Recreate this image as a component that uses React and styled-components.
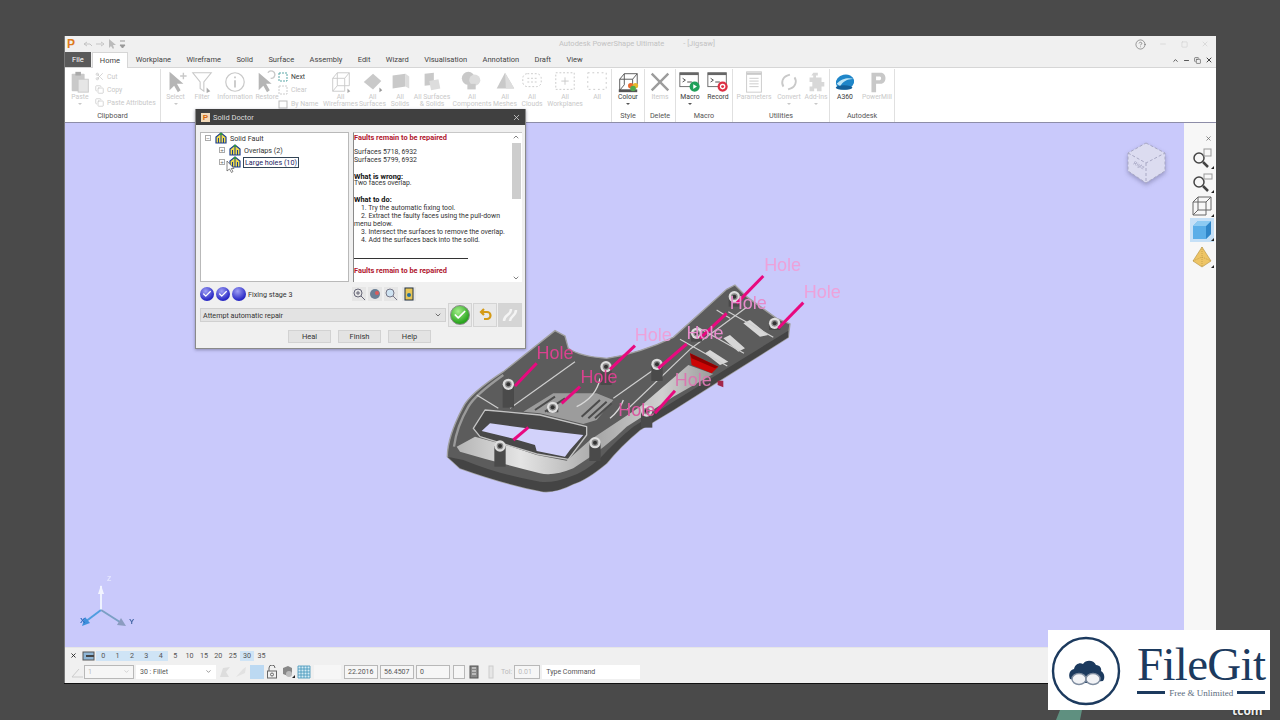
import React from 'react';
import styled, { createGlobalStyle } from 'styled-components';
import { X, ChevronDown, ChevronUp, Minus, Square, Copy as CopyIcon, Scissors, HelpCircle, Check } from 'lucide-react';

const GlobalStyle = createGlobalStyle`
    html, body {
        margin: 0;
        width: 1280px;
        height: 720px;
        overflow: hidden;
        background: #4a4a4a;
        font-family: Roboto, "Liberation Sans", sans-serif;
    }
    * { box-sizing: border-box; }
`;

const Page = styled.div`
    position: relative;
    width: 1280px;
    height: 720px;
    padding: 36px 64px 37px 64px;
`;

const Window = styled.div`
    position: relative;
    width: 1152px;
    height: 647px;
    display: flex;
    flex-direction: column;
    background: #f0f0f0;
    border-left: 1px solid #777;
    box-shadow: 0 1px 0 #111;
`;

const TitleBar = styled.div`
    height: 16px;
    flex: none;
    display: flex;
    align-items: center;
    padding: 0 5px 0 2px;
    position: relative;
`;

const AppLogo = styled.span`
    font: bold 12px "Liberation Sans", sans-serif;
    color: #dd7a1c;
    width: 16px;
`;

const QuickIcons = styled.div`
    display: flex;
    align-items: center;
    gap: 3px;
    color: #c4c4c4;
`;

const TitleText = styled.div`
    position: absolute;
    left: 494px;
    top: 3px;
    display: flex;
    gap: 19px;
    font: 7.5px Roboto, sans-serif;
    color: #c2c2c2;
    white-space: nowrap;
`;

const WinButtons = styled.div`
    margin-left: auto;
    display: flex;
    align-items: center;
    gap: 13.5px;
    padding-right: 2px;
    color: #cfcfcf;
`;

const TabStrip = styled.div`
    height: 16px;
    flex: none;
    display: flex;
    align-items: flex-end;
    border-bottom: 1px solid #d6d6d6;
`;

const Tab = styled.div`
    height: ${p => (p.$active ? 16 : 15)}px;
    display: flex;
    align-items: center;
    padding: 0 ${p => p.$pad || 7.7}px;
    font: 7.5px Roboto, sans-serif;
    color: ${p => (p.$file ? '#fff' : '#444')};
    background: ${p => (p.$file ? '#5a5a5a' : p.$active ? '#fff' : 'transparent')};
    margin-bottom: ${p => (p.$active ? -1 : 0)}px;
    margin-right: ${p => (p.$file ? 1 : 0)}px;
    border: ${p => (p.$active ? '1px solid #d6d6d6' : 'none')};
    border-bottom: none;
    position: relative;
`;

const SmallControls = styled.div`
    margin-left: auto;
    display: flex;
    align-items: center;
    gap: 4px;
    padding: 0 3px 3px 0;
    color: #444;
`;

const Ribbon = styled.div`
    height: 55px;
    flex: none;
    display: flex;
    background: #fff;
    border-bottom: 1px solid #8d8da8;
`;

const Group = styled.section`
    width: ${p => p.$w}px;
    flex: none;
    display: flex;
    flex-direction: column;
    border-right: 1px solid #e0e0e0;
    margin-top: 1px;
`;

const GroupTools = styled.div`
    flex: 1;
    display: flex;
    min-height: 0;
`;

const GroupLabel = styled.div`
    height: 13px;
    flex: none;
    text-align: center;
    font: 7.2px/13px Roboto, sans-serif;
    color: #555;
`;

const Tool = styled.div`
    width: ${p => p.$w}px;
    flex: none;
    display: flex;
    flex-direction: column;
    align-items: center;
    padding-top: 1px;
    color: ${p => (p.$off ? '#c8c8c8' : '#3a3a3a')};
    font: 6.8px/7px Roboto, sans-serif;
    text-align: center;
    white-space: nowrap;
`;

const ToolIcon = styled.svg`
    width: 24px;
    height: 24px;
    flex: none;
`;

const Caret = styled.span`
    width: 0;
    height: 0;
    margin-top: 2px;
    border-left: 2px solid transparent;
    border-right: 2px solid transparent;
    border-top: 2px solid ${p => (p.$off ? '#c8c8c8' : '#555')};
`;

const Stack = styled.div`
    width: ${p => p.$w}px;
    flex: none;
    display: flex;
    flex-direction: column;
    padding-top: 1px;
`;

const StackRow = styled.div`
    height: 13.5px;
    display: flex;
    align-items: center;
    gap: 3px;
    font: 6.8px Roboto, sans-serif;
    color: ${p => (p.$off ? '#c8c8c8' : '#3a3a3a')};
    white-space: nowrap;
`;

const Body = styled.div`
    flex: 1;
    display: flex;
    min-height: 0;
`;

const Canvas = styled.main`
    position: relative;
    flex: 1;
    background: #c9c9fb;
`;

const ModelDrawing = styled.svg`
    position: absolute;
    left: 375px;
    top: 127px;
    width: 410px;
    height: 250px;
    overflow: visible;
    filter: blur(.35px);
`;

const Triad = styled.svg`
    position: absolute;
    left: 10px;
    top: 441px;
    width: 70px;
    height: 65px;
    filter: blur(.4px);
`;

const ViewCube = styled.svg`
    position: absolute;
    left: 1060px;
    top: 16px;
    width: 44px;
    height: 48px;
    filter: drop-shadow(0 2px 2px rgba(90, 90, 130, .45)) blur(.3px);
`;

const SideBar = styled.aside`
    width: 32px;
    flex: none;
    display: flex;
    flex-direction: column;
    align-items: center;
    padding: 4px 0 0 4px;
    background: #f7f7f7;
    color: #666;
`;

const SideClose = styled.div`
    align-self: flex-end;
    padding-right: 4px;
    height: 19px;
`;

const SideButton = styled.div`
    position: relative;
    width: 24px;
    height: 24px;
    margin-top: ${p => p.$mt || 0}px;
    display: flex;
    align-items: center;
    justify-content: center;
    background: ${p => (p.$on ? '#c5e0f7' : 'transparent')};
    &:after {
        content: '';
        position: absolute;
        right: 0;
        bottom: 1px;
        border-left: 3px solid transparent;
        border-bottom: 3px solid #222;
    }
`;

const StatusBar = styled.footer`
    height: 36px;
    flex: none;
    display: flex;
    flex-direction: column;
    padding: 0 0 0 5px;
    background: #f0f0f0;
    border-top: 1px solid #e6e6e6;
`;

const StatusRow = styled.div`
    height: ${p => p.$h}px;
    flex: none;
    display: flex;
    align-items: center;
`;

const Level = styled.div`
    width: 14.4px;
    height: 10px;
    text-align: center;
    font: 7.2px/10px Roboto, sans-serif;
    color: #555;
    background: ${p => (p.$on ? '#cfe4f6' : 'transparent')};
`;

const Field = styled.div`
    width: ${p => p.$w}px;
    height: 14px;
    flex: none;
    margin-left: ${p => p.$ml || 0}px;
    display: flex;
    align-items: center;
    justify-content: space-between;
    padding: 0 3px;
    font: 7px Roboto, sans-serif;
    color: ${p => (p.$off ? '#bbb' : '#555')};
    background: ${p => (p.$flat ? '#f6f6f6' : '#fff')};
    border: 1px solid ${p => (p.$border ? '#b8b8b8' : 'transparent')};
`;

const StatusIcon = styled.svg`
    width: 14px;
    height: 14px;
    flex: none;
    margin-left: ${p => p.$ml || 0}px;
`;

const TolLabel = styled.span`
    margin-left: ${p => p.$ml || 0}px;
    font: 7px Roboto, sans-serif;
    color: #bbb;
`;

const Dialog = styled.div`
    position: absolute;
    left: 130px;
    top: 73px;
    width: 331px;
    height: 240px;
    display: flex;
    flex-direction: column;
    background: #f0f0f0;
    border: 1px solid #8a8a8a;
    border-top: none;
    box-shadow: 0 1px 3px rgba(60, 60, 90, .45);
    z-index: 2;
`;

const DialogTitle = styled.div`
    height: 16px;
    flex: none;
    display: flex;
    align-items: center;
    justify-content: space-between;
    padding: 0 4px 0 5px;
    background: #404040;
    color: #ddd;
    font: 7.5px Roboto, sans-serif;
`;

const DialogName = styled.div`
    display: flex;
    align-items: center;
    gap: 3px;
`;

const DialogLogo = styled.span`
    width: 9px;
    height: 9px;
    background: #f2d9b8;
    color: #d9680c;
    font: bold 8px/9px "Liberation Sans", sans-serif;
    text-align: center;
`;

const Panes = styled.div`
    height: 150px;
    flex: none;
    margin: 7px 3px 0 4px;
    display: flex;
    gap: 4px;
`;

const TreePane = styled.div`
    width: 149px;
    flex: none;
    background: #fff;
    border: 1px solid #b9b9b9;
    padding: 0 0 0 4px;
`;

const TreeRow = styled.div`
    height: 12px;
    display: flex;
    align-items: center;
    gap: 2px;
    margin-left: ${p => p.$indent || 0}px;
    font: 7.2px Roboto, sans-serif;
    color: #333;
    &:first-child {
        margin-top: -1px;
    }
`;

const TreeToggle = styled.span`
    width: 6px;
    height: 6px;
    flex: none;
    border: 1px solid #aaa;
    position: relative;
    margin-right: 2px;
    &:after {
        content: '${p => (p.$open ? '−' : '+')}';
        position: absolute;
        left: -1px;
        top: -2px;
        width: 6px;
        font: 6px/8px "Liberation Sans", sans-serif;
        text-align: center;
        color: #666;
    }
`;

const TreeLabel = styled.span`
    padding: 0 1px;
    border: ${p => (p.$focus ? '1px solid #345' : 'none')};
    color: ${p => (p.$focus ? '#23235f' : '#333')};
    line-height: 9px;
`;

const Pointer = styled.svg`
    position: absolute;
    left: 30px;
    top: 51px;
    width: 9px;
    height: 13px;
`;

const ReportPane = styled.div`
    flex: 1;
    display: flex;
    background: #fff;
    border-left: 1px solid #8a8a8a;
    border-top: 1px solid #c8c8c8;
    min-width: 0;
`;

const ReportText = styled.div`
    flex: 1;
    overflow: hidden;
    padding: 1px 0 0 0;
    font: 6.9px/7.72px Roboto, sans-serif;
    color: #333;
`;

const FaultHead = styled.div`
    font-weight: 700;
    font-size: 7.4px;
    color: #b0162e;
`;

const ReportHead = styled.div`
    font-weight: 700;
    font-size: 7.4px;
    color: #111;
    margin-bottom: ${p => p.$mb || 0}px;
`;

const Gap = styled.div`
    height: 7.72px;
`;

const NumberedLine = styled.div`
    text-indent: 7px;
    line-height: 8px;
`;

const ReportRule = styled.div`
    width: 114px;
    border-top: 1px solid #333;
    margin: 14.5px 0 8px;
`;

const ScrollTrack = styled.div`
    width: 12px;
    flex: none;
    display: flex;
    flex-direction: column;
    align-items: center;
    justify-content: space-between;
    color: #444;
    background: #fff;
`;

const ScrollThumb = styled.div`
    width: 9px;
    height: 56px;
    margin-top: 2px;
    background: #cdcdcd;
    margin-bottom: auto;
`;

const StageRow = styled.div`
    height: 16px;
    flex: none;
    margin: 4px 3px 0 4px;
    display: flex;
    align-items: center;
`;

const StageBall = styled.span`
    width: 14px;
    height: 14px;
    flex: none;
    margin-right: 2px;
    border-radius: 50%;
    display: flex;
    align-items: center;
    justify-content: center;
    color: #fff;
    background: radial-gradient(circle at 40% 30%, #9f9ff5, #2828c4 70%);
`;

const StageText = styled.span`
    font: 7.2px Roboto, sans-serif;
    color: #333;
    width: 104px;
`;

const MiniButton = styled.svg`
    width: 14px;
    height: 14px;
    flex: none;
    margin-right: ${p => p.$mr || 2}px;
    background: #e6e6e6;
`;

const RepairRow = styled.div`
    height: 24px;
    flex: none;
    margin: 1px 3px 0 4px;
    display: flex;
    align-items: center;
`;

const Combo = styled.div`
    width: 246px;
    height: 14px;
    flex: none;
    margin-right: 2px;
    display: flex;
    align-items: center;
    justify-content: space-between;
    padding: 0 3px 0 2px;
    background: #e3e3e3;
    border: 1px solid #d0d0d0;
    font: 7.2px Roboto, sans-serif;
    color: #333;
`;

const RepairButton = styled.div`
    width: 24px;
    height: 24px;
    flex: none;
    margin-right: 1px;
    display: flex;
    align-items: center;
    justify-content: center;
    background: ${p => (p.$off ? '#d5d5d5' : '#e9e9e9')};
    border: 1px solid #d4d4d4;
`;

const OkBall = styled.span`
    width: 20px;
    height: 20px;
    border-radius: 50%;
    display: flex;
    align-items: center;
    justify-content: center;
    color: #fff;
    background: radial-gradient(circle at 40% 30%, #a4ef8a, #2aa51f 70%);
    border: 1px solid #888;
`;

const ActionRow = styled.div`
    flex: 1;
    display: flex;
    align-items: flex-start;
    justify-content: center;
    gap: 7px;
    padding: 3px 2px 0 0;
`;

const ActionButton = styled.div`
    width: 43px;
    height: 13px;
    background: #e3e3e3;
    border: 1px solid #d2d2d2;
    text-align: center;
    font: 7.5px/11px Roboto, sans-serif;
    color: #333;
`;

const Watermark = styled.div`
    position: absolute;
    left: 1048px;
    top: 630px;
    width: 222px;
    height: 80px;
    display: flex;
    align-items: center;
    padding: 0 5px 0 2px;
    background: #fff;
    z-index: 3;
`;

const WatermarkCircle = styled.svg`
    width: 74px;
    height: 74px;
    flex: none;
`;

const WatermarkText = styled.div`
    flex: 1;
    margin-left: 13px;
    padding-bottom: 2px;
    display: flex;
    flex-direction: column;
    color: #1c3a5e;
`;

const BrandName = styled.div`
    font: 47px/47px "Liberation Serif", serif;
    letter-spacing: -.7px;
    white-space: nowrap;
`;

const BrandTag = styled.div`
    display: flex;
    align-items: center;
    gap: 4px;
    font: 9px/10px "Liberation Serif", serif;
    color: #5b6b7c;
    white-space: nowrap;
    &:before, &:after {
        content: '';
        flex: 1;
        height: 2.5px;
        background: #1c3a5e;
    }
`;

const CornerMark = styled.div`
    position: absolute;
    left: 1232px;
    top: 702px;
    font: bold 12px "Open Sans", sans-serif;
    color: #eee;
    text-shadow: 0 0 2px #111;
    z-index: 2;
`;

const TealScrap = styled.svg`
    position: absolute;
    left: 1056px;
    top: 710px;
    width: 32px;
    height: 10px;
`;

const GREY = '#c9c9c9';

const glyphs = {
    paste: <g fill={GREY}><rect x="4" y="4" width="14" height="19" rx="1" /><rect x="8" y="2" width="6" height="4" fill="#aaa" /><rect x="11" y="10" width="11" height="14" fill="#e6e6e6" stroke={GREY} /></g>,
    select: <g fill="#b5b5b5"><path d="M6 2 L6 22 L11 17 L15 24 L18 22 L14 15 L21 15 Z" /><path d="M21 3 v7 M17.500 6.500 h7" stroke={GREY} strokeWidth="1.500" /></g>,
    filter: <g fill="none" stroke={GREY} strokeWidth="1.200"><path d="M3 3 H23 L15 13 V23 L11 20 V13 Z" /><path d="M18 19 l0 6 l4 -2 z" fill="#aaa" stroke="none" /></g>,
    info: <g fill="none" stroke={GREY} strokeWidth="1.300"><circle cx="13" cy="13" r="10" /><path d="M13 11 V19 M13 7 v2" strokeWidth="2" /></g>,
    restore: <g fill="#b5b5b5"><path d="M4 3 L4 22 L9 17 L13 24 L16 22 L12 15 L18 15 Z" /><path d="M17 9 a4 4 0 1 0 -3 -6" fill="none" stroke={GREY} strokeWidth="1.500" /></g>,
    wire: <g fill="none" stroke={GREY}><path d="M4 9 H17 V23 H4 Z M9 3 H22 V17 H17 M4 9 L9 3 M17 9 L22 3 M9 3 V17 H17 M4 23 L9 17" /><path d="M20 20 l0 5 l3 -2 z" fill="#aaa" stroke="none" /></g>,
    surface: <g fill={GREY}><path d="M3 13 L13 4 L22 12 L13 21 Z" /><path d="M20 19 l0 5 l3 -2 z" fill="#999" /></g>,
    solid: <g fill={GREY}><path d="M5 6 L19 4 V18 L5 20 Z" /><path d="M19 4 L23 7 V20 L19 18 Z" fill="#ddd" /></g>,
    both: <g fill={GREY}><path d="M5 4 L15 3 L15 16 L5 17 Z" /><path d="M10 12 L20 10 L22 20 L12 22 Z" fill="#ddd" /></g>,
    comp: <g fill={GREY}><circle cx="9" cy="9" r="7" /><circle cx="16" cy="11" r="6" fill="#ddd" /><rect x="8" y="15" width="9" height="6" /></g>,
    mesh: <g fill={GREY}><path d="M13 3 L23 20 H4 Z" /><path d="M13 3 L23 20 H14 Z" fill="#ddd" /></g>,
    cloud: <g fill="none" stroke={GREY} strokeDasharray="2 2"><rect x="3" y="4" width="20" height="14" rx="5" /><path d="M8 9 h10 M8 13 h10" /></g>,
    plane: <g fill="none" stroke={GREY} strokeDasharray="2 2"><rect x="3" y="3" width="20" height="18" /><path d="M13 8 v8 M9 12 h8" strokeDasharray="none" /></g>,
    all: <g fill="none" stroke={GREY} strokeDasharray="2 3"><rect x="3" y="3" width="20" height="18" /></g>,
    colour: <g><path d="M4 10 H18 V22 H4 Z M9 4 H23 V16 H18 M4 10 L9 4 M18 10 L23 4 M4 22 L9 16 V4" fill="none" stroke="#555" /><rect x="3" y="21" width="20" height="3" fill="#555" /><circle cx="16" cy="17" r="3" fill="#ea6a2e" /><circle cx="21" cy="17" r="3" fill="#e7b82f" /><circle cx="18.500" cy="20" r="3" fill="#4eab4e" /></g>,
    del: <path d="M4 4 L22 22 M22 4 L4 22" stroke="#9c9c9c" strokeWidth="2.600" />,
    macro: <g><rect x="2" y="3" width="20" height="15" fill="#fff" stroke="#666" /><rect x="2" y="3" width="20" height="2.500" fill="#666" /><path d="M5 9 l3 2 l-3 2 M10 13 h5" fill="none" stroke="#444" /><circle cx="18" cy="18" r="5.500" fill="#1fa05a" /><path d="M16.500 15.500 l4 2.500 l-4 2.500 z" fill="#fff" /></g>,
    record: <g><rect x="2" y="3" width="20" height="15" fill="#fff" stroke="#666" /><rect x="2" y="3" width="20" height="2.500" fill="#666" /><path d="M5 9 l3 2 l-3 2 M10 13 h5" fill="none" stroke="#444" /><circle cx="18" cy="18" r="5.500" fill="#dd2f43" /><circle cx="18" cy="18" r="3" fill="#fff" /><circle cx="18" cy="18" r="1.600" fill="#dd2f43" /></g>,
    params: <g fill="none" stroke={GREY}><rect x="5" y="2" width="16" height="22" /><path d="M5 4 h16" strokeWidth="2.500" /><path d="M8 9 h10 M8 12 h10 M8 15 h10 M8 18 h10" /></g>,
    convert: <g fill="none" stroke={GREY} strokeWidth="2"><path d="M7 18 a8 8 0 0 1 4 -12 l3 -1" /><path d="M19 8 a8 8 0 0 1 -4 12 l-3 1" /></g>,
    addins: <path fill="#d8d8d8" d="M10 3 h5 v3 h-2 v2 h6 v5 h3 v5 h-3 v5 h-5 v-3 h-3 v3 h-5 v-5 h3 v-5 h-3 v-5 h4 v-2 h-2 z" />,
    a360: <g><ellipse cx="13" cy="13" rx="10" ry="8" fill="#1f86c9" transform="rotate(-12 13 13)" /><path d="M4 15 C10 8 18 8 23 10 C18 9 10 12 8 18 Z" fill="#bfe6f7" /><ellipse cx="12" cy="19" rx="9" ry="2.500" fill="#14609a" /></g>,
    pmill: <path fill="#c8c8c8" fillRule="evenodd" d="M7 3 H17 C24 3 24 15 17 15 H12 V24 H7 Z M12 7 V11 H16 C18 11 18 7 16 7 Z" />,
};

const ToolItem = ({ w, glyph, off, caret, children }) => (
    <Tool $w={w} $off={off}>
        <ToolIcon viewBox="0 0 26 26">{glyphs[glyph]}</ToolIcon>
        {children}
        {caret && <Caret $off={off} />}
    </Tool>
);

const FaultIcon = () => (
    <svg width="12" height="12" viewBox="0 0 12 12" style={{ flex: 'none' }}>
        <path d="M1 11 V5 L6 1 L11 5 V11 Z" fill="#f0dc4a" stroke="#1c3f8f" strokeWidth="1.200" />
        <path d="M6 3 V11 M3.500 6 V11 M8.500 6 V11" stroke="#1c3f8f" strokeWidth="1" />
        <circle cx="6" cy="2" r="1.300" fill="#2f9a3c" />
    </svg>
);

const ModelPath = () => {
    const bosses = [[205, 403, 70], [498, 350, 55], [651, 343, 50], [883, 140, 30], [1004, 220, 20], [770, 250, 25], [338, 472, 15], [620, 483, 50], [180, 588, 62], [465, 578, 55]];
    const beams = [[970, 78, 890, 160], [1090, 158, 1015, 235], [860, 190, 780, 265], [740, 282, 655, 355], [585, 287, 510, 358], [290, 340, 225, 408], [420, 410, 365, 460], [265, 532, 220, 570], [705, 422, 645, 490]];
    const ribs = [[110, 435, 175, 475], [210, 475, 405, 335], [720, 268, 862, 348], [770, 230, 912, 310], [865, 185, 1000, 262], [560, 480, 750, 298], [750, 298, 920, 172], [830, 180, 870, 205], [520, 445, 640, 360]];
    const labels = [[1028, 64, '#eda2da'], [1147, 145, '#eda2da'], [925, 176, '#e68ccb'], [640, 274, '#eda2da'], [795, 268, '#e68ccb'], [345, 326, '#d9428f'], [477, 398, '#d9428f'], [760, 408, '#d977b0'], [590, 498, '#d9579f']];
    return (
        <g transform="scale(.3333)">
            <defs>
                <linearGradient id="frontFloor" x1="0" y1="0" x2="1" y2="0">
                    <stop offset="0" stopColor="#b4b4b4" />
                    <stop offset=".25" stopColor="#e4e4e4" />
                    <stop offset=".55" stopColor="#a8a8a8" />
                    <stop offset=".8" stopColor="#d0d0d0" />
                    <stop offset="1" stopColor="#9a9a9a" />
                </linearGradient>
            </defs>
            <path d="M22 620 Q22 560 70 470 Q90 430 190 365 L345 242 L375 258 L385 295 Q420 320 500 325 Q600 310 700 262 L860 118 L885 105 L920 140 L1010 205 L1050 222 L1045 262 L850 385 L700 480 L600 540 Q540 590 500 640 Q440 690 400 702 Q350 728 310 725 Q200 705 60 655 Z" fill="#5c5c5c" stroke="#a0a0a0" strokeWidth="4" />
            <path d="M22 620 L60 655 Q200 705 310 725 Q350 728 400 702 Q440 690 500 640 Q540 590 600 540 L700 480 L850 385 L1045 262 L1045 242 L850 362 L700 455 L580 530 Q530 570 480 625 Q430 670 390 680 Q340 700 300 695 Q180 675 70 630 Z" fill="#444" />
            <path d="M50 590 L105 560 L215 590 L290 615 L380 632 L450 570 L600 470 L745 345 L820 372 L700 440 L560 530 Q500 590 400 655 Q340 680 300 670 Q180 640 60 605 Z" fill="url(#frontFloor)" />
            <path d="M42 590 Q50 530 85 470 Q105 435 190 375" fill="none" stroke="#9a9a9a" strokeWidth="7" />
            <path d="M250 485 L340 430 L470 430 L520 450 L470 510 L430 522 L300 490 Z" fill="#9c9c9c" />
            <path d="M285 480 L345 440 M315 485 L375 445 M425 500 L480 450 M445 505 L500 455 M465 505 L515 460" stroke="#4c4c4c" strokeWidth="6" />
            <path d="M410 470 Q470 440 480 385" fill="none" stroke="#d8d8d8" strokeWidth="4" />
            <path d="M510 505 Q540 480 550 450" fill="none" stroke="#d8d8d8" strokeWidth="4" />
            <path d="M100 535 L135 480 L300 495 L440 530 L440 555 L385 628 L290 612 L120 560 Z" fill="#484848" stroke="#c4c4c4" strokeWidth="4" strokeLinejoin="round" />
            <path d="M125 543 L215 565 L285 585 L290 603 L375 620 L390 600 L430 555 L300 540 L150 520 Z" fill="#d2d2fa" />
            <path d="M910 220 L930 210 L985 255 L960 260 Z M850 265 L870 255 L915 295 L895 305 Z M795 310 L810 300 L865 335 L840 345 Z" fill="#d7d7d7" />
            {ribs.map(([a, b, c, d]) => (
                <line key={`${a}-${b}`} x1={a} y1={b} x2={c} y2={d} stroke="#cfcfcf" strokeWidth="3.500" />
            ))}
            <path d="M750 310 L835 350 L815 370 L755 345 Z" fill="#cc0505" />
            <path d="M750 310 L835 350 L825 355 L755 325 Z" fill="#8e0000" />
            <path d="M833 392 H850 V412 L833 405 Z" fill="#a3264a" />
            {bosses.map(([x, y, h]) => (
                <g key={`${x}-${y}`}>
                    <rect x={x - 17} y={y} width="34" height={h} fill="#4a4a4a" />
                    <circle cx={x} cy={y} r="17" fill="#dedede" />
                    <circle cx={x} cy={y} r="10" fill="#8a8a8a" />
                    <circle cx={x} cy={y} r="6" fill="#333" />
                </g>
            ))}
            {beams.map(([a, b, c, d]) => (
                <line key={`${a}-${b}`} x1={a} y1={b} x2={c} y2={d} stroke="#e8097f" strokeWidth="9" />
            ))}
            {labels.map(([x, y, fill]) => (
                <text key={`${x}-${y}`} x={x} y={y} fill={fill} textAnchor="middle" fontFamily="Liberation Sans, sans-serif" fontSize="54">Hole</text>
            ))}
        </g>
    );
};

const App = () => (
    <Page>
        <GlobalStyle />
        <Window>
            <TitleBar>
                <AppLogo>P</AppLogo>
                <QuickIcons>
                    <svg width="22" height="9" viewBox="0 0 22 9" fill="none" stroke="#c4c4c4"><path d="M1 4 H7 L9 6 M1 4 l3 -2 M1 4 l3 2 M13 4 H19 M21 4 l-3 -2 M21 4 l-3 2" /></svg>
                    <svg width="8" height="10" viewBox="0 0 8 10" fill="#bbb"><path d="M1 0 V9 L3 7 L5 10 L6 9 L5 6 H8 Z" /></svg>
                    <svg width="7" height="9" viewBox="0 0 7 9" fill="#999"><path d="M1 1 H6 M1 5 L3.500 8 L6 5 Z" stroke="#999" /></svg>
                </QuickIcons>
                <TitleText>
                    <span>Autodesk PowerShape Ultimate</span>
                    <span>- [Jigsaw]</span>
                </TitleText>
                <WinButtons>
                    <HelpCircle size={11} color="#555" strokeWidth={1.200} />
                    <Minus size={8} />
                    <Square size={7} />
                    <X size={8} />
                </WinButtons>
            </TitleBar>
            <TabStrip>
                <Tab $file $pad={7}>File</Tab>
                <Tab $active $pad={7}>Home</Tab>
                <Tab>Workplane</Tab>
                <Tab>Wireframe</Tab>
                <Tab>Solid</Tab>
                <Tab>Surface</Tab>
                <Tab>Assembly</Tab>
                <Tab>Edit</Tab>
                <Tab>Wizard</Tab>
                <Tab>Visualisation</Tab>
                <Tab>Annotation</Tab>
                <Tab>Draft</Tab>
                <Tab>View</Tab>
                <SmallControls>
                    <ChevronUp size={7} strokeWidth={3} />
                    <Minus size={7} strokeWidth={3} />
                    <CopyIcon size={7} strokeWidth={2} />
                    <X size={8} strokeWidth={3} />
                </SmallControls>
            </TabStrip>
            <Ribbon>
                <Group $w={96}>
                    <GroupTools>
                        <ToolItem w={30} glyph="paste" off caret>Paste</ToolItem>
                        <Stack $w={66}>
                            <StackRow $off><Scissors size={9} />Cut</StackRow>
                            <StackRow $off><CopyIcon size={9} />Copy</StackRow>
                            <StackRow $off><CopyIcon size={9} />Paste Attributes</StackRow>
                        </Stack>
                    </GroupTools>
                    <GroupLabel>Clipboard</GroupLabel>
                </Group>
                <Group $w={451}>
                    <GroupTools>
                        <ToolItem w={29} glyph="select" off caret>Select</ToolItem>
                        <ToolItem w={24} glyph="filter" off>Filter</ToolItem>
                        <ToolItem w={42} glyph="info" off>Information</ToolItem>
                        <ToolItem w={22} glyph="restore" off>Restore</ToolItem>
                        <Stack $w={45}>
                            <StackRow><svg width="10" height="10" viewBox="0 0 10 10" fill="none" stroke="#5aa7a7" strokeDasharray="2 1"><rect x="1" y="1" width="8" height="8" /></svg>Next</StackRow>
                            <StackRow $off><svg width="10" height="10" viewBox="0 0 10 10" fill="none" stroke="#ccc" strokeDasharray="2 1"><rect x="1" y="1" width="8" height="8" /></svg>Clear</StackRow>
                            <StackRow $off><svg width="10" height="10" viewBox="0 0 10 10" fill="none" stroke="#bbb"><rect x="1" y="2" width="8" height="7" /></svg>By Name</StackRow>
                        </Stack>
                        <ToolItem w={35} glyph="wire" off>All<br />Wireframes</ToolItem>
                        <ToolItem w={29} glyph="surface" off>All<br />Surfaces</ToolItem>
                        <ToolItem w={26} glyph="solid" off>All<br />Solids</ToolItem>
                        <ToolItem w={38} glyph="both" off>All Surfaces<br />&amp; Solids</ToolItem>
                        <ToolItem w={42} glyph="comp" off>All<br />Components</ToolItem>
                        <ToolItem w={24} glyph="mesh" off>All<br />Meshes</ToolItem>
                        <ToolItem w={30} glyph="cloud" off>All<br />Clouds</ToolItem>
                        <ToolItem w={36} glyph="plane" off>All<br />Workplanes</ToolItem>
                        <ToolItem w={28} glyph="all" off>All</ToolItem>
                    </GroupTools>
                </Group>
                <Group $w={33}>
                    <GroupTools><ToolItem w={32} glyph="colour" caret>Colour</ToolItem></GroupTools>
                    <GroupLabel>Style</GroupLabel>
                </Group>
                <Group $w={31}>
                    <GroupTools><ToolItem w={30} glyph="del" off>Items</ToolItem></GroupTools>
                    <GroupLabel>Delete</GroupLabel>
                </Group>
                <Group $w={57}>
                    <GroupTools>
                        <ToolItem w={28} glyph="macro" caret>Macro</ToolItem>
                        <ToolItem w={28} glyph="record">Record</ToolItem>
                    </GroupTools>
                    <GroupLabel>Macro</GroupLabel>
                </Group>
                <Group $w={97}>
                    <GroupTools>
                        <ToolItem w={42} glyph="params" off>Parameters</ToolItem>
                        <ToolItem w={28} glyph="convert" off caret>Convert</ToolItem>
                        <ToolItem w={26} glyph="addins" off caret>Add-Ins</ToolItem>
                    </GroupTools>
                    <GroupLabel>Utilities</GroupLabel>
                </Group>
                <Group $w={65}>
                    <GroupTools>
                        <ToolItem w={30} glyph="a360">A360</ToolItem>
                        <ToolItem w={34} glyph="pmill" off>PowerMill</ToolItem>
                    </GroupTools>
                    <GroupLabel>Autodesk</GroupLabel>
                </Group>
            </Ribbon>
            <Body>
                <Canvas>
                    <ModelDrawing viewBox="0 0 410 250"><ModelPath /></ModelDrawing>
                    <Triad viewBox="0 0 70 65">
                        <path d="M26 46 V22" fill="none" stroke="#eef2ff" strokeWidth="2" />
                        <path d="M26 46 L10 58" stroke="#4f9de0" strokeWidth="2" />
                        <path d="M26 46 L48 60" stroke="#7b9fc4" strokeWidth="2" />
                        <path d="M23 30 L26 21 L29 30 Z" fill="#f2f4ff" />
                        <path d="M7 62 L10 53 L15 59 Z" fill="#3e90dc" />
                        <path d="M51 62 L42 61 L46 54 Z" fill="#8b9cc0" />
                        <text x="32" y="17" fontFamily="Liberation Sans, sans-serif" fontSize="7" fontWeight="700" fill="#e4e6ff">Z</text>
                        <text x="5" y="59" fontFamily="Liberation Sans, sans-serif" fontSize="8" fontWeight="700" fill="#2e6ec0">X</text>
                        <text x="54" y="60" fontFamily="Liberation Sans, sans-serif" fontSize="8" fontWeight="700" fill="#4a6aa8">Y</text>
                    </Triad>
                    <ViewCube viewBox="0 0 44 48">
                        <path d="M21 4 L40 14 V32 L21 44 L3 32 V14 Z" fill="#dcdcf0" stroke="#a8a8c4" strokeDasharray="3 2" />
                        <path d="M3 14 L21 24 L40 14 M21 24 V44" fill="none" stroke="#a8a8c4" strokeDasharray="3 2" />
                        <text x="8" y="25" fontFamily="Liberation Sans, sans-serif" fontSize="5" fill="#9a9ab8" transform="rotate(28 8 25)">Right</text>
                    </ViewCube>
                </Canvas>
                <SideBar>
                    <SideClose><X size={7} strokeWidth={2.500} /></SideClose>
                    <SideButton>
                        <svg width="22" height="22" viewBox="0 0 22 22" fill="none" stroke="#444"><circle cx="8" cy="11" r="5" strokeWidth="1.500" /><path d="M12 15 L17 20" strokeWidth="2.500" /><rect x="13" y="2" width="7" height="7" stroke="#999" /></svg>
                    </SideButton>
                    <SideButton>
                        <svg width="22" height="22" viewBox="0 0 22 22" fill="none" stroke="#444"><circle cx="8" cy="11" r="5" strokeWidth="1.500" /><path d="M12 15 L17 20" strokeWidth="2.500" /><rect x="13" y="3" width="8" height="5" stroke="#999" /></svg>
                    </SideButton>
                    <SideButton>
                        <svg width="22" height="22" viewBox="0 0 22 22" fill="none" stroke="#666"><path d="M2 7 H15 V20 H2 Z M7 2 H20 V15 H15 M2 7 L7 2 M15 7 L20 2 M7 2 V15 H15 M2 20 L7 15" /></svg>
                    </SideButton>
                    <SideButton $on>
                        <svg width="22" height="22" viewBox="0 0 22 22"><path d="M2 7 L7 2 H20 V15 L15 20 H2 Z" fill="#5aaee8" /><path d="M15 7 L20 2 V15 L15 20 Z" fill="#2f86c9" /><path d="M2 7 L7 2 H20 L15 7 Z" fill="#8ccaf2" /></svg>
                    </SideButton>
                    <SideButton $mt={3}>
                        <svg width="22" height="22" viewBox="0 0 22 22"><path d="M11 1 L20 15 L11 21 L2 15 Z" fill="#eec566" stroke="#b08f3e" strokeWidth=".6" /><path d="M11 1 V21 M2 15 L11 11 L20 15" fill="none" stroke="#b08f3e" strokeWidth=".6" strokeDasharray="1 1" /></svg>
                    </SideButton>
                </SideBar>
            </Body>
            <StatusBar>
                <StatusRow $h={15}>
                    <X size={7} strokeWidth={3} color="#222" />
                    <StatusIcon $ml={5} viewBox="0 0 14 14"><rect x="1" y="3" width="11" height="8" fill="#8fb6d6" stroke="#555" /><rect x="4" y="6" width="8" height="2" fill="#444" /></StatusIcon>
                    <Level $on>0</Level>
                    <Level $on>1</Level>
                    <Level $on>2</Level>
                    <Level $on>3</Level>
                    <Level $on>4</Level>
                    <Level>5</Level>
                    <Level>10</Level>
                    <Level>15</Level>
                    <Level>20</Level>
                    <Level>25</Level>
                    <Level $on>30</Level>
                    <Level>35</Level>
                </StatusRow>
                <StatusRow $h={17}>
                    <StatusIcon viewBox="0 0 14 14"><path d="M2 12 H13 M2 12 L9 4" stroke="#ccc" fill="none" /></StatusIcon>
                    <Field $w={50} $flat $border $off>1<ChevronDown size={7} /></Field>
                    <Field $w={80} $ml={2}>30 : Fillet<ChevronDown size={7} /></Field>
                    <StatusIcon $ml={2} viewBox="0 0 14 14"><path d="M2 12 L5 3 L12 2 L8 7 L11 12 Z" fill="#ddd" /></StatusIcon>
                    <StatusIcon $ml={2} viewBox="0 0 14 14"><path d="M2 12 L9 4 L12 2 L11 8 Z" fill="#e2e2e2" /></StatusIcon>
                    <StatusIcon $ml={2} viewBox="0 0 14 14"><rect width="14" height="14" fill="#bcd9f2" /></StatusIcon>
                    <StatusIcon $ml={1} viewBox="0 0 14 14" fill="none" stroke="#666"><rect x="2.500" y="6" width="9" height="7" /><path d="M4 6 V3 a3 3 0 0 1 6 0" /><circle cx="7" cy="9.500" r="1.500" /></StatusIcon>
                    <StatusIcon $ml={2} viewBox="0 0 14 14"><path d="M2 3 L7 1 L11 3 V9 L7 11 L2 9 Z" fill="#888" /><circle cx="8" cy="9" r="3" fill="#bbb" /><path d="M11 13 L14 13 L14 10 Z" fill="#222" /></StatusIcon>
                    <StatusIcon $ml={2} viewBox="0 0 14 14" stroke="#3c93b8" strokeWidth=".8"><path d="M1 1 H13 V13 H1 Z M1 4 H13 M1 7 H13 M1 10 H13 M4 1 V13 M7 1 V13 M10 1 V13" fill="#d5ecf5" /></StatusIcon>
                    <Field $w={27} $ml={3} $flat />
                    <Field $w={34} $ml={3} $border $flat>22.2016</Field>
                    <Field $w={34} $ml={2} $border $flat>56.4507</Field>
                    <Field $w={34} $ml={2} $border $flat>0</Field>
                    <Field $w={12} $ml={3} $border $flat />
                    <StatusIcon $ml={2} viewBox="0 0 14 14"><rect x="3" y="1" width="8" height="12" fill="#888" stroke="#555" /><path d="M5 3 h4 M5 6 h4 M5 9 h4" stroke="#eee" /></StatusIcon>
                    <StatusIcon $ml={3} viewBox="0 0 14 14"><rect x="5" y="1" width="4" height="12" fill="#e6e6e6" stroke="#ccc" /></StatusIcon>
                    <TolLabel $ml={3}>Tol:</TolLabel>
                    <Field $w={26} $ml={2} $border $flat $off>0.01</Field>
                    <Field $w={98} $ml={2}>Type Command</Field>
                </StatusRow>
            </StatusBar>
            <Dialog>
                <DialogTitle>
                    <DialogName><DialogLogo>P</DialogLogo>Solid Doctor</DialogName>
                    <X size={9} strokeWidth={2} />
                </DialogTitle>
                <Panes>
                    <TreePane>
                        <TreeRow><TreeToggle $open /><FaultIcon /><TreeLabel>Solid Fault</TreeLabel></TreeRow>
                        <TreeRow $indent={14}><TreeToggle /><FaultIcon /><TreeLabel>Overlaps (2)</TreeLabel></TreeRow>
                        <TreeRow $indent={14}><TreeToggle /><FaultIcon /><TreeLabel $focus>Large holes (10)</TreeLabel></TreeRow>
                    </TreePane>
                    <ReportPane>
                        <ReportText>
                            <FaultHead>Faults remain to be repaired</FaultHead>
                            <Gap />
                            <div>Surfaces 5718, 6932</div>
                            <div>Surfaces 5799, 6932</div>
                            <Gap />
                            <ReportHead>What is wrong:</ReportHead>
                            <div>Two faces overlap.</div>
                            <Gap />
                            <ReportHead $mb={.5}>What to do:</ReportHead>
                            <NumberedLine>1. Try the automatic fixing tool.</NumberedLine>
                            <NumberedLine>2. Extract the faulty faces using the pull-down menu below.</NumberedLine>
                            <NumberedLine>3. Intersect the surfaces to remove the overlap.</NumberedLine>
                            <NumberedLine>4. Add the surfaces back into the solid.</NumberedLine>
                            <ReportRule />
                            <FaultHead>Faults remain to be repaired</FaultHead>
                        </ReportText>
                        <ScrollTrack>
                            <ChevronUp size={8} strokeWidth={2} />
                            <ScrollThumb />
                            <ChevronDown size={8} strokeWidth={2} />
                        </ScrollTrack>
                    </ReportPane>
                </Panes>
                <StageRow>
                    <StageBall><Check size={10} strokeWidth={3} /></StageBall>
                    <StageBall><Check size={10} strokeWidth={3} /></StageBall>
                    <StageBall />
                    <StageText>Fixing stage 3</StageText>
                    <MiniButton viewBox="0 0 14 14" fill="none" stroke="#667"><circle cx="6" cy="6" r="4" /><path d="M9 9 L13 13 M4 6 H8 M6 4 V8" /></MiniButton>
                    <MiniButton viewBox="0 0 14 14"><circle cx="7" cy="7" r="5" fill="#6b7f95" /><circle cx="9" cy="6" r="2" fill="#dd5a5a" /></MiniButton>
                    <MiniButton $mr={4} viewBox="0 0 14 14" fill="none" stroke="#778"><circle cx="6" cy="6" r="4" fill="#cfe3f2" /><path d="M9 9 L13 13" /></MiniButton>
                    <MiniButton viewBox="0 0 14 14"><rect x="3" y="1" width="8" height="12" fill="#e8c657" stroke="#234" /><circle cx="7" cy="8" r="2" fill="#27709c" /></MiniButton>
                </StageRow>
                <RepairRow>
                    <Combo>Attempt automatic repair<ChevronDown size={8} /></Combo>
                    <RepairButton><OkBall><Check size={14} strokeWidth={3} /></OkBall></RepairButton>
                    <RepairButton>
                        <svg width="14" height="14" viewBox="0 0 14 14" fill="none" stroke="#d49a16" strokeWidth="2.200"><path d="M4 4 H9 a3 3 0 0 1 0 7 H6 M6 1 L3 4 L6 7" /></svg>
                    </RepairButton>
                    <RepairButton $off>
                        <svg width="18" height="18" viewBox="0 0 18 18" fill="none" stroke="#f4f4f4" strokeWidth="2.500"><path d="M3 15 C3 8 10 10 10 3 M9 15 C9 10 15 10 15 4" /></svg>
                    </RepairButton>
                </RepairRow>
                <ActionRow>
                    <ActionButton>Heal</ActionButton>
                    <ActionButton>Finish</ActionButton>
                    <ActionButton>Help</ActionButton>
                </ActionRow>
                <Pointer viewBox="0 0 9 13"><path d="M1 1 V11 L3.500 9 L5.500 12.500 L7 11.500 L5.200 8.500 H8 Z" fill="#fff" stroke="#555" strokeWidth=".7" /></Pointer>
            </Dialog>
        </Window>
        <TealScrap viewBox="0 0 32 10"><path d="M4 0 H26 L24 10 H0 Z" fill="#5f9080" /></TealScrap>
        <CornerMark>tcom</CornerMark>
        <Watermark>
            <WatermarkCircle viewBox="0 0 74 74">
                <circle cx="36" cy="38" r="33" fill="none" stroke="#1c3a5e" strokeWidth="2.400" />
                <path d="M20 46 C18 41 20 37 24 36 C25 31 30 29 33 31 C36 26 44 27 46 32 C50 32 52 36 51 38 C55 40 55 46 53 48 L36 50 Z" fill="#1c3a5e" />
                <ellipse cx="29" cy="46" rx="7" ry="5.500" fill="#f2f3f6" stroke="#7f8da0" strokeWidth="1.400" />
                <ellipse cx="43" cy="46" rx="7" ry="5.500" fill="#f2f3f6" stroke="#7f8da0" strokeWidth="1.400" />
            </WatermarkCircle>
            <WatermarkText>
                <BrandName>FileGit</BrandName>
                <BrandTag>Free &amp; Unlimited</BrandTag>
            </WatermarkText>
        </Watermark>
    </Page>
);

export default App;
